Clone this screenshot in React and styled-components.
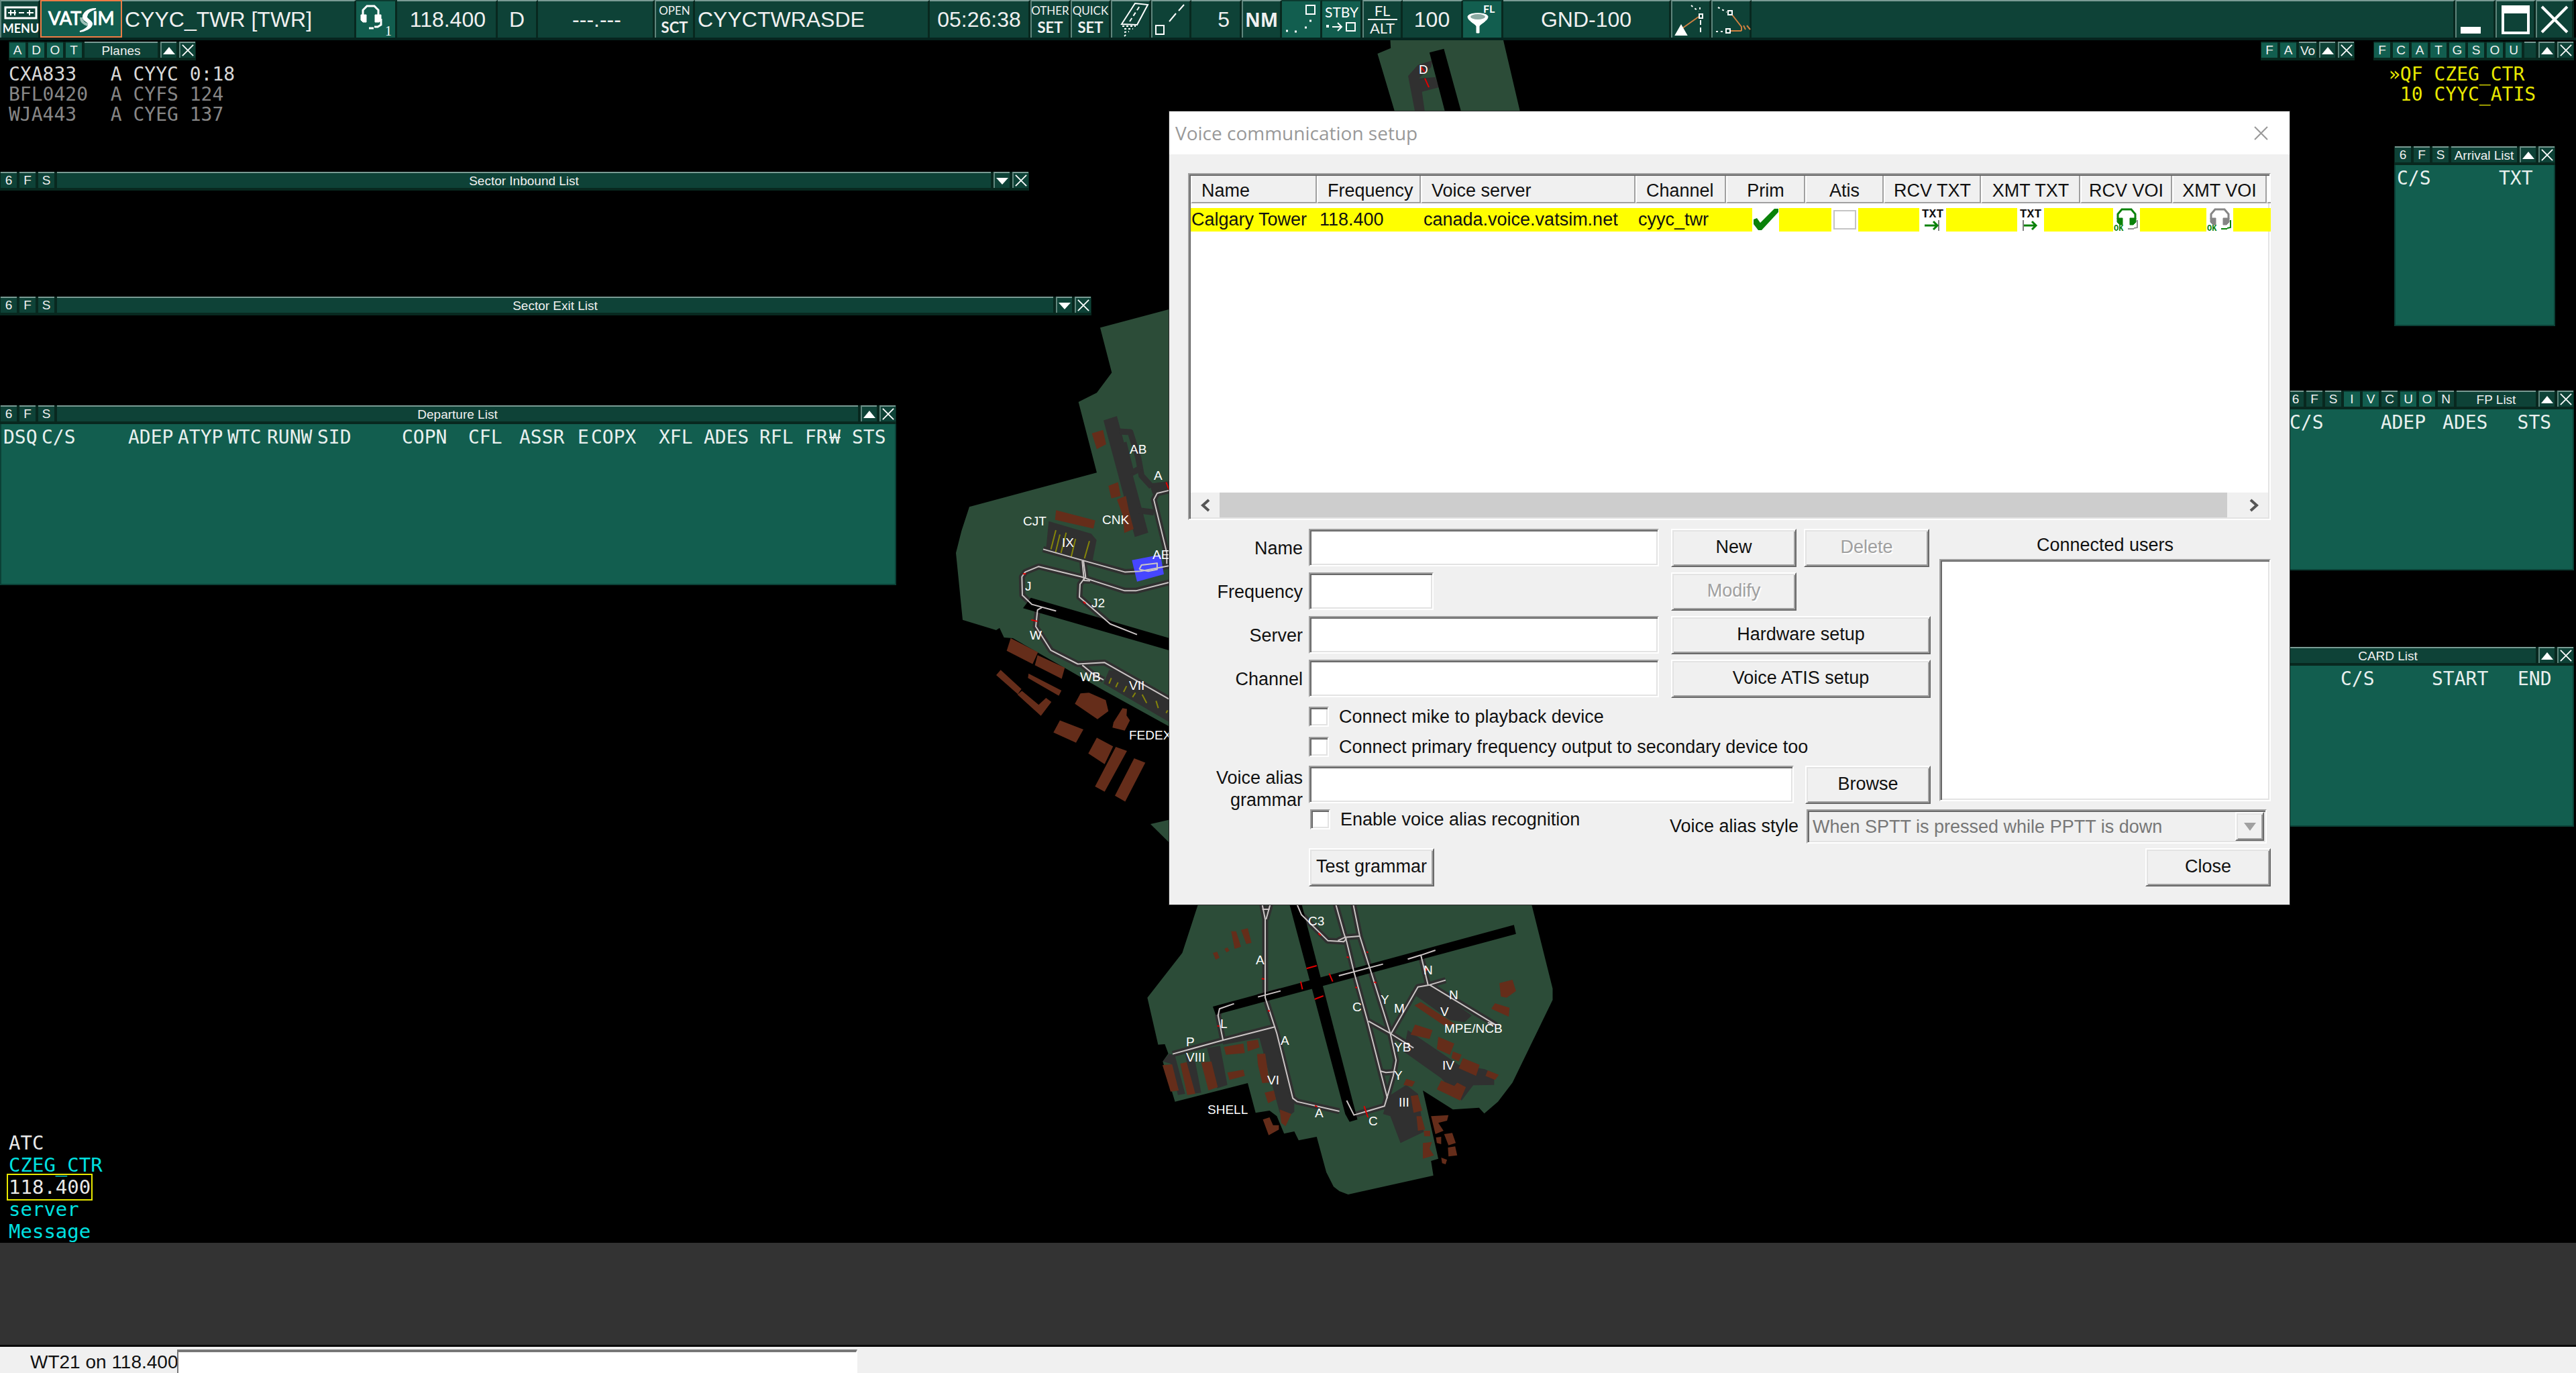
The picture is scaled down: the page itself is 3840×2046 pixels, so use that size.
import React from "react";
import styled, { createGlobalStyle } from "styled-components";

const GlobalStyle = createGlobalStyle`
  * {
    box-sizing: border-box;
  }

  body {
    margin: 0;
    background: #000;
    font-family: "Liberation Sans", Arial, sans-serif;
  }

  button, input, select {
    font-family: inherit;
    border-radius: 0;
  }
`;

const Screen = styled.div`
  display: flex;
  flex-direction: column;
  height: 100vh;
  overflow: hidden;
`;

/* ---------- top toolbar ---------- */

const Toolbar = styled.header`
  display: flex;
  height: 60px;
  padding-right: 3px;
  border-bottom: 4px solid #06241e;
`;

const ToolButton = styled.button`
  display: flex;
  flex: ${(p) => (p.$grow ? "1" : "none")};
  align-items: center;
  justify-content: ${(p) => p.$align || "center"};
  width: ${(p) => p.$width || 60}px;
  height: 56px;
  padding: ${(p) => p.$pad || "0"};
  background: ${(p) => (p.$lit ? "#125e4f" : "#0e4237")};
  border: 0 solid #08281f;
  border-top: 2px solid ${(p) => (p.$lit ? "#0b3a30" : "#7a9b94")};
  border-left: ${(p) => (p.$edge ? "2px solid #5f857c" : "0")};
  border-right-width: 3px;
  color: #f0f0f0;
  font-size: 32px;
  line-height: 36px;
  white-space: pre;

  svg {
    display: block;
    flex: none;
    overflow: visible;
  }
`;

const LogoButton = styled(ToolButton)`
  background: #125e4f;
  border: 2px solid #ee7c45;
`;

const TwoLine = styled.span`
  display: flex;
  flex-direction: column;
  align-items: center;
  font-family: Lato, sans-serif;
  font-size: ${(p) => (p.$big ? 22 : 17)}px;
  line-height: 24px;

  b {
    font-size: 22px;
    line-height: 26px;
  }

  hr {
    width: 44px;
    margin: 0;
    border: 0;
    border-top: 2px solid #f0f0f0;
  }
`;

const Bold = styled.b`
  font-family: "Open Sans", sans-serif;
  font-size: 28px;
`;

/* ---------- radar and list windows ---------- */

const Radar = styled.main`
  position: relative;
  flex: 1;
  background: #000;
`;

const Map = styled.svg`
  position: absolute;
  inset: 0;
  width: 100%;
  height: 100%;

  polyline, polygon {
    vector-effect: non-scaling-stroke;
  }

  text {
    fill: #fff;
    font-family: "Liberation Sans", Arial, sans-serif;
    font-size: 19px;
  }
`;

const ListWindow = styled.section`
  position: absolute;
  top: ${(p) => p.$top}px;
  left: ${(p) => (p.$left === undefined ? "auto" : p.$left + "px")};
  right: ${(p) => (p.$right === undefined ? "auto" : p.$right + "px")};
  width: ${(p) => p.$width}px;
`;

const ListBar = styled.div`
  display: flex;
  gap: 4px;
  height: 28px;
  padding: 0 1px;
  background: #08281f;
`;

const BarButton = styled.button`
  display: flex;
  align-items: center;
  justify-content: center;
  width: 24px;
  height: 24px;
  padding: 0;
  background: ${(p) => (p.$lit ? "#125e4f" : "#0e4237")};
  border: 0;
  border-top: 2px solid ${(p) => (p.$lit ? "#0b3a30" : "#7a9b94")};
  border-left: ${(p) => (p.$edge ? "2px solid #5f857c" : "0")};
  color: #f0f0f0;
  font-size: 19px;
`;

const BarTitle = styled.h2`
  flex: 1;
  height: 24px;
  margin: 0;
  overflow: hidden;
  background: #0e4237;
  border-top: 2px solid #7a9b94;
  color: #f0f0f0;
  font-size: 19px;
  font-weight: normal;
  line-height: 24px;
  text-align: center;
  white-space: nowrap;
`;

const ListBody = styled.div`
  height: 240px;
  padding-top: 5px;
  background: #125e4f;
  border: 2px solid #0b4036;
  border-top: 0;
`;

const ListTable = styled.table`
  width: 100%;
  table-layout: fixed;
  border-collapse: collapse;

  th {
    padding: 0;
    color: #e8f0ee;
    font-family: "DejaVu Sans Mono", monospace;
    font-size: 28px;
    font-weight: normal;
    line-height: 30px;
    text-align: left;
    white-space: nowrap;
  }
`;

const MonoLine = styled.div`
  height: ${(p) => p.$height || 30}px;
  color: ${(p) => p.$color};
  font-family: "DejaVu Sans Mono", monospace;
  line-height: ${(p) => p.$height || 30}px;
  white-space: pre;
`;

const MonoBlock = styled.div`
  padding-top: 6px;
  padding-left: ${(p) => p.$indent || 0}px;
  font-size: 28px;
`;

const Channels = styled.div`
  position: absolute;
  bottom: 0;
  left: 13px;
  font-size: 29px;
`;

const Selected = styled.span`
  outline: 2px solid #e8e800;
  outline-offset: 1px;
`;

/* ---------- bottom ---------- */

const Messages = styled.section`
  height: 155px;
  background: #333;
  border-bottom: 3px solid #0a0a0a;
`;

const CommandLine = styled.footer`
  display: flex;
  height: 39px;
  padding-top: 4px;
  background: #f0f0f0;

  label {
    width: 264px;
    padding-left: 45px;
    color: #111;
    font-size: 28px;
    line-height: 38px;
    white-space: nowrap;
  }

  input {
    width: 1014px;
    height: 39px;
    background: #fff;
    border: 2px solid #fff;
    border-top: 4px solid #777;
    border-left: 2px solid #777;
  }
`;

/* ---------- voice dialog ---------- */

const Dialog = styled.section`
  position: absolute;
  top: 106px;
  left: 1743px;
  width: 1670px;
  background: #f0f0f0;
  outline: 1px solid #2b2b2b;
  color: #111;
  font-size: 27px;
`;

const DialogTitle = styled.header`
  display: flex;
  align-items: center;
  justify-content: space-between;
  height: 64px;
  padding: 0 32px 0 9px;
  background: #fff;

  h1 {
    margin: 0;
    color: #999;
    font-family: "Open Sans", sans-serif;
    font-size: 28px;
    font-weight: normal;
  }

  button {
    padding: 0;
    background: none;
    border: 0;
  }

  svg {
    display: block;
  }
`;

const DialogBody = styled.form`
  padding: 28px 28px 27px;
`;

const sunken = `
  background: #fff;
  border: 2px solid #fff;
  border-top-color: #a0a0a0;
  border-left-color: #a0a0a0;
  box-shadow: inset 2px 2px #696969, inset -2px -2px #e3e3e3;
`;

const raised = `
  background: #f0f0f0;
  border: 2px solid #696969;
  border-top-color: #fff;
  border-left-color: #fff;
  box-shadow: inset 2px 2px #e3e3e3, inset -2px -2px #a0a0a0;
`;

const ListView = styled.div`
  ${sunken}
  display: flex;
  flex-direction: column;
  justify-content: space-between;
  height: 517px;
  padding: 2px;
`;

const FreqTable = styled.table`
  width: 100%;
  table-layout: fixed;
  border-collapse: separate;
  border-spacing: 0;

  th {
    height: 41px;
    padding: 4px 0 0 14px;
    background: #f0f0f0;
    border-right: 2px solid #a0a0a0;
    border-bottom: 2px solid #a0a0a0;
    border-left: 2px solid #fff;
    font-weight: normal;
    line-height: 30px;
    text-align: left;
    white-space: nowrap;
  }

  th.mid {
    padding: 4px 0 0;
    text-align: center;
  }

  th:last-child {
    border-right: 0;
    background: #fff;
    padding: 0;
  }

  tbody::before {
    content: "";
    display: block;
    height: 7px;
  }

  td {
    height: 35px;
    padding: 0 0 0 4px;
    background: #ff0;
    line-height: 35px;
    white-space: nowrap;
  }

  td:first-child {
    padding-left: 1px;
  }

  td.mid {
    padding: 0;
  }

  svg {
    display: block;
    margin: 0 auto;
    overflow: visible;
    background: #fff;
  }
`;

const AtisBox = styled.label`
  display: block;
  width: 40px;
  height: 35px;
  margin: 0 auto;
  padding: 3px;
  background: #fff;

  input {
    display: block;
    width: 34px;
    height: 29px;
    margin: 0;
    appearance: none;
    border: 2px solid #c4c4c4;
  }
`;

const ScrollBar = styled.div`
  display: flex;
  height: 37px;
  background: #f0f0f0;

  button {
    display: flex;
    align-items: center;
    justify-content: center;
    width: 43px;
    padding: 0;
    background: none;
    border: 0;
  }
`;

const Thumb = styled.div`
  flex: 1;
  margin-right: 18px;
  background: #cdcdcd;
`;

const Columns = styled.div`
  display: flex;
  justify-content: space-between;
  margin-top: 13px;
`;

const Fields = styled.div`
  display: flex;
  flex-direction: column;
  gap: 9px;
  width: 1107px;
`;

const Row = styled.div`
  display: flex;
  align-items: ${(p) => p.$align || "center"};
  height: 56px;
`;

const FieldLabel = styled.label`
  width: 171px;
  margin-right: 9px;
  padding-top: 2px;
  line-height: 33px;
  text-align: right;
`;

const TextInput = styled.input`
  ${sunken}
  width: ${(p) => p.$width || 522}px;
  height: 56px;
  padding: 0 8px;
  font-size: 27px;
`;

const Actions = styled.div`
  display: flex;
  gap: 11px;
  width: 387px;
  margin-left: auto;
`;

const PushButton = styled.button`
  ${raised}
  width: ${(p) => p.$width || 187}px;
  height: 57px;
  padding: 0 0 2px;
  color: #111;
  font-size: 27px;
  white-space: nowrap;

  &:disabled {
    color: #a0a0a0;
    text-shadow: 2px 2px #fff;
  }
`;

const BrowseButton = styled(PushButton)`
  margin-left: auto;
`;

const Checks = styled.div`
  display: flex;
  flex-direction: column;
  gap: 15px;
  padding: 5px 0 4px 180px;
`;

const CheckLabel = styled.label`
  display: flex;
  align-items: center;
  gap: 15px;
  height: 30px;
  line-height: 34px;
  white-space: nowrap;

  input {
    ${sunken}
    width: 30px;
    height: 30px;
    margin: 0;
    appearance: none;
  }
`;

const Users = styled.div`
  width: 494px;

  h3 {
    margin: 0;
    padding-top: 2px;
    font-size: 27px;
    font-weight: normal;
    line-height: 45px;
    height: 45px;
    text-align: center;
  }
`;

const UserList = styled.ul`
  ${sunken}
  height: 361px;
  margin: 0;
  padding: 0;
`;

const AliasRow = styled.div`
  display: flex;
  align-items: flex-start;
  justify-content: space-between;
  height: 51px;
  margin-top: 9px;
  padding: 0 6px 0 182px;
`;

const StyleField = styled.div`
  display: flex;
  align-items: center;
  gap: 12px;
`;

const SelectBox = styled.div`
  ${sunken}
  display: flex;
  width: 686px;
  height: 51px;
  padding: 2px;
  background: #f0f0f0;

  select {
    flex: 1;
    padding: 0 5px;
    appearance: none;
    background: none;
    border: 0;
    color: #777;
    font-size: 27px;
    opacity: 1;
  }
`;

const DropArrow = styled.span`
  ${raised}
  display: flex;
  align-items: center;
  justify-content: center;
  width: 43px;
`;

const BottomRow = styled.div`
  display: flex;
  justify-content: space-between;
  margin-top: 7px;
  padding-left: 180px;
`;

/* ---------- toolbar icons ---------- */

const captionFont = { fontFamily: "Lato, sans-serif", fill: "#fff" };

const MenuIcon = () => (
  <svg width="56" height="54" fill="none" stroke="#fff" strokeWidth="3">
    <rect x="6" y="9" width="46" height="16" />
    <path d="M10 17H22M14 13V21M20 13V21M26 17H34M38 17H48M42 13V21" strokeWidth="2" />
    <text x="29" y="47" textAnchor="middle" fontSize="18" fontWeight="bold" stroke="none" {...captionFont}>MENU</text>
  </svg>
);

const VatsimLogo = () => (
  <svg width="116" height="52">
    <text x="9" y="35" fontSize="27" stroke="#fff" {...captionFont}>VAT</text>
    <text x="75" y="35" fontSize="27" stroke="#fff" {...captionFont}>IM</text>
    <path
      d="M80 11C66 11 60 19 61 25C62 29 69 30 69 34C69 39 62 43 56 45C64 44 73 40 74 34C75 29 66 27 66 23C66 17 72 13 80 11Z"
      fill="#fff"
      stroke="#fff"
      strokeWidth="2"
    />
    <path d="M58 24C58 31 64 34 68 35" stroke="#9fc2ba" strokeWidth="4" fill="none" />
  </svg>
);

const HeadsetIcon = () => (
  <svg width="57" height="54" fill="none" stroke="#fff" strokeWidth="3">
    <path d="M9 20V13L15 7H26L32 13V20" />
    <path d="M6 20H14V31H9L6 28ZM27 20H36V28L33 31H27Z" fill="#fff" strokeWidth="1" />
    <path d="M36 26V35L31 38H26M18 40H25" />
    <text x="42" y="51" fontSize="20" stroke="none" fill="#fff" fontFamily="Liberation Serif, serif">1</text>
  </svg>
);

const RunwayIcon = () => (
  <svg width="54" height="54" fill="none" stroke="#fff" strokeWidth="2">
    <path d="M13 34L33 3L52 5L36 35Z" />
    <path d="M25 30L40 7" strokeDasharray="6 4" />
    <path d="M14 37L34 37M17 41L30 41M17 46L24 45M17 52L20 49" strokeDasharray="3 3" />
  </svg>
);

const VectorIcon = () => (
  <svg width="54" height="54" fill="none" stroke="#fff" strokeWidth="2">
    <rect x="4" y="36" width="12" height="13" />
    <path d="M24 30L34 18M38 14L46 5" />
  </svg>
);

const TrailIcon = () => (
  <svg width="56" height="54" fill="none" stroke="#fff" strokeWidth="2">
    <rect x="35" y="6" width="13" height="13" />
    <path d="M40 29h3M33 39h3M18 45h3M5 44h3" strokeWidth="3" />
  </svg>
);

const StandbyIcon = () => (
  <svg width="56" height="54" fill="none" stroke="#fff" strokeWidth="2">
    <text x="28" y="24" textAnchor="middle" fontSize="21" stroke="none" {...captionFont}>STBY</text>
    <path d="M5 37h4" strokeWidth="4" />
    <path d="M14 38H28M22 32L28 38L22 44" />
    <rect x="35" y="32" width="13" height="12" />
  </svg>
);

const FilterIcon = () => (
  <svg width="56" height="54" stroke="#fff">
    <text x="29" y="17" fontSize="16" fontWeight="bold" stroke="none" {...captionFont}>FL</text>
    <path d="M6 23C6 16 36 16 36 23C36 29 24 34 23 37V47H19V37C18 34 6 29 6 23Z" fill="#fff" />
    <ellipse cx="21" cy="23" rx="11" ry="4" fill="#8aa9a2" stroke="none" />
  </svg>
);

const ConeIcon = () => (
  <svg width="54" height="54" fill="none" stroke="#fff" strokeWidth="2">
    <path d="M14 40L38 23" stroke="#d08040" />
    <path d="M4 50L12 36L20 50Z" fill="#fff" />
    <rect x="39" y="19" width="5" height="6" />
    <path d="M41 28V49" strokeDasharray="7 4" />
    <path d="M27 6L38 15M40 9V16" strokeDasharray="3 4" />
  </svg>
);

const RouteIcon = () => (
  <svg width="54" height="54" fill="none" stroke="#fff" strokeWidth="2">
    <path d="M28 20L42 38V44M25 44H42M50 36L55 42M45 36L48 42" stroke="#d08040" />
    <rect x="22" y="14" width="6" height="6" />
    <rect x="19" y="41" width="6" height="6" fill="#0e4237" />
    <path d="M7 9L20 16M4 45H17" strokeDasharray="3 4" />
  </svg>
);

const CrossIcon = ({ size = 18, color = "#fff", width = 2 }) => (
  <svg width={size} height={size} viewBox="0 0 20 20" stroke={color} strokeWidth={width}>
    <path d="M1 1L19 19M19 1L1 19" />
  </svg>
);

/* ---------- table icons ---------- */

const CheckIcon = () => (
  <svg width="40" height="35">
    <path d="M2 17L7 15L12 22L33 1H39V6L14 33H9L2 24Z" fill="#0a820a" />
  </svg>
);

const TxtIcon = ({ out }) => (
  <svg width="40" height="35" fill="none">
    <text x="20" y="14" textAnchor="middle" fontSize="18" fontWeight="bold" fill="#111" fontFamily="Liberation Mono, monospace">TXT</text>
    <path d={out ? "M9 18V34" : "M29 18V34"} stroke="#808080" strokeWidth="2" />
    <path d={out ? "M10 26H28M22 20L28 26L22 32" : "M8 26H27M21 20L27 26L21 32"} stroke="#0a820a" strokeWidth="3" />
  </svg>
);

const VoiceIcon = ({ color, mic }) => (
  <svg width="40" height="35" fill="none" stroke={color} strokeWidth="3">
    <path d="M7 16V9L13 2H27L33 9V16" />
    <path d="M6 15H14V25H10L6 21ZM25 15H34V21L30 25H25Z" fill={color} strokeWidth="1" />
    <path d="M36 18V29L31 30M22 31H31" stroke={mic} strokeWidth="2" />
    <text x="1" y="34" fontSize="12" fontWeight="bold" fill="#0a820a" stroke="none" fontFamily="Liberation Mono, monospace">OK</text>
  </svg>
);

/* ---------- airport map ---------- */

const GRASS = "#2c4c38";
const APRON = "#303030";
const BUILDING = "#652d1a";

const sheets = [
  {
    transform: "translate(1300 0) scale(0.861 0.3333)",
    grass: ["897,170 1092,170 1122,500 905,500 875,240 898,215"],
    runways: ["965,235 990,218 1020,500 992,500"],
    aprons: ["928,340 945,290 970,270 968,300 947,350 975,345 982,390 952,410 957,500 940,500"],
    buildings: [],
    lines: [],
    stops: ["950,298 957,322", "957,350 964,390"],
    stands: [],
  },
  {
    transform: "translate(1400 440) scale(0.3333 0.5484)",
    grass: [
      "1030,38 720,88 772,210 705,265 623,290 705,482 135,575 100,640 75,700 105,882 255,910 270,904 290,930 330,932 560,1012 740,1075 1030,1172",
      "945,1437 1030,1425 1030,1488",
    ],
    aprons: [
      "735,340 795,328 935,645 875,657",
      "490,614 680,648 704,665 685,725 478,688",
      "760,1018 850,1030 1030,1100 1030,1160 735,1055",
      "940,512 1030,505 1030,535 955,540",
    ],
    runways: ["410,822 1030,932 1030,965 375,850"],
    buildings: [
      "683,375 733,366 747,405 705,418",
      "757,518 800,508 812,545 770,552",
      "795,555 835,545 850,590 870,635 828,646 822,600",
      "523,584 698,612 690,634 518,610",
      "320,932 442,970 418,1002 302,966",
      "440,978 562,1012 548,1042 428,1005",
      "275,1018 368,1070 352,1084 255,1032",
      "400,1028 547,1074 535,1088 397,1040",
      "370,1075 445,1113 478,1094 502,1105 455,1143 350,1085",
      "632,1082 670,1080 745,1100 757,1130 708,1152 607,1110",
      "780,1160 820,1122 840,1124 838,1142 853,1155 830,1183 775,1175",
      "540,1155 645,1180 612,1216 511,1188",
      "705,1202 778,1226 740,1274 667,1245",
      "790,1227 840,1238 740,1349 697,1335",
      "872,1258 922,1270 832,1376 786,1360",
    ],
    taxi: ["805,370 855,372 890,440 905,490 950,520", "855,485 900,470", "895,585 960,590", "825,400 860,485"],
    blocks: ["862,720 990,705 1005,758 885,778"],
    lines: [
      "465,690 640,720 830,752 900,750 1030,735",
      "523,858 415,840 372,815 370,765 385,752 445,737 635,765 700,778 830,803 880,803 1030,780",
      "645,720 655,765 630,785 627,820 680,848 765,893 885,922",
      "640,722 648,775 675,776",
      "460,848 440,855 432,900 500,965 620,1002 740,998 1030,1098",
      "640,1005 690,1030 735,1045",
      "1030,530 975,538 960,555 1018,700 1018,730",
      "895,745 905,733 975,728 975,745 935,750 895,745",
    ],
    stops: ["375,757 388,757", "645,833 655,838", "412,882 440,886", "1015,508 1028,528"],
    stands: [
      "500,690 522,638", "520,700 540,650", "545,700 568,645", "590,712 610,662", "650,715 672,668",
      "760,1055 770,1040", "790,1065 800,1052", "825,1078 838,1062", "865,1092 878,1080",
      "908,1085 928,1108", "970,1102 980,1122", "1015,1135 1022,1128",
    ],
  },
  {
    transform: "translate(1680 1340) scale(0.4337 0.3333)",
    grass: [
      "245,20 190,240 70,440 107,650 130,648 142,690 123,725 165,905 415,822 442,955 490,945 515,970 540,1048 575,1038 590,1078 652,1062 685,1220 710,1285 730,1305 760,1320 1053,1235 1045,1170 1070,1160 1017,855 1120,940 1210,932 1228,958 1275,905 1325,820 1463,450 1463,400 1390,20",
    ],
    aprons: [
      "330,625 400,590 510,570 520,620 575,905 575,950 560,965 525,955 455,620 330,650",
      "275,665 320,655 345,830 310,845",
      "200,690 235,730 255,865 225,870",
      "123,725 145,690 165,700 200,870 175,875 150,735",
      "1045,390 1185,520 1160,550 1110,540 975,415 1000,400",
      "965,585 1140,740 1230,760 1262,780 1262,830 1190,832 1150,900 1080,800 950,680",
      "900,880 960,830 1000,870 1020,1040 940,1090 905,970 880,960",
    ],
    runways: ["558,20 600,20 792,985 765,995 750,960", "295,480 1330,115 1337,155 305,517"],
    buildings: [
      "358,143 375,143 392,212 370,222",
      "392,137 415,130 428,195 410,200",
      "335,222 345,215 352,230 342,238",
      "295,240 310,235 318,262 305,270",
      "1280,375 1325,360 1337,410 1305,440 1285,435",
      "1265,465 1315,485 1312,525 1252,490",
      "988,475 1010,460 1130,560 1090,565",
      "990,560 1050,585 1040,625 975,605",
      "1070,615 1125,645 1110,695 1065,670",
      "1120,680 1150,695 1140,725 1115,710",
      "1155,710 1212,740 1200,790 1140,755",
      "1240,765 1278,785 1265,808 1232,790",
      "1080,810 1125,835 1135,820 1165,840 1145,900 1065,850",
      "960,803 990,815 980,838 950,830",
      "975,880 1000,875 1015,945 985,955",
      "995,970 1012,970 1025,1030 1000,1035",
      "1020,1035 1042,1035 1042,1060 1022,1060",
      "1017,1090 1048,1085 1040,1115 1055,1145 1017,1160",
      "1045,970 1105,965 1100,990 1070,1000 1088,1035 1060,1050",
      "1062,1065 1080,1062 1080,1095 1065,1090",
      "1090,1050 1118,1045 1130,1090 1105,1100",
      "1103,1110 1128,1105 1135,1145 1105,1150",
      "1080,1155 1100,1165 1095,1185 1083,1180",
      "122,742 155,738 178,855 150,860",
      "183,735 205,728 235,870 207,875",
      "255,730 290,725 312,840 280,855",
      "333,660 400,645 405,688 340,695",
      "412,635 450,628 455,662 415,680",
      "345,775 400,762 405,790 352,808",
      "447,692 475,690 490,820 465,822 450,740",
      "473,865 505,855 512,895 485,912",
      "525,940 565,960 545,1015 530,1000",
      "467,985 490,975 502,1010 522,1010 522,1030 487,1055",
    ],
    lines: [
      "465,25 475,90 475,440 515,600 570,890 585,905 730,948",
      "492,25 478,90",
      "465,45 490,45",
      "585,25 600,70 690,185 745,190 755,175",
      "718,25 745,150 755,190 780,325 830,560 895,890",
      "778,25 800,165 835,310 905,600 925,720 915,790 893,890 885,925 780,965 755,900",
      "725,185 750,170 800,165",
      "728,342 880,290",
      "965,268 1010,250 1060,228",
      "1010,250 1035,385",
      "1095,362 1040,383 1000,392 908,600",
      "1040,383 1265,560 1240,552",
      "830,545 905,600 985,665",
      "870,768 890,775 918,772",
      "368,467 318,490 313,520 330,630",
      "157,692 330,630 510,570",
      "450,437 528,410",
    ],
    stops: [
      "617,310 652,297", "695,332 707,368", "597,368 603,403", "645,447 675,432", "815,925 828,975",
      "463,355 472,357", "484,498 491,500", "310,566 317,568", "658,152 666,162", "755,258 762,260",
      "823,235 829,238", "849,370 857,374", "785,393 791,396", "646,923 654,928", "1025,308 1032,318",
    ],
    stands: [],
  },
];

const mapLabels = [
  ["D", 2115, 110], ["AB", 1684, 676], ["A", 1720, 715], ["CJT", 1525, 783], ["CNK", 1643, 781],
  ["AE", 1718, 833], ["IX", 1583, 815], ["J", 1528, 880], ["J2", 1627, 905], ["W", 1535, 953],
  ["WB", 1610, 1015], ["VII", 1683, 1028], ["FEDEX", 1683, 1102], ["C3", 1950, 1379],
  ["A", 1872, 1437], ["N", 2122, 1452], ["N", 2160, 1489], ["Y", 2058, 1496], ["C", 2016, 1507],
  ["M", 2078, 1509], ["V", 2147, 1514], ["MPE/NCB", 2153, 1539], ["L", 1819, 1532],
  ["A", 1909, 1557], ["P", 1768, 1559], ["YB", 2078, 1567], ["VIII", 1768, 1582],
  ["IV", 2150, 1594], ["Y", 2078, 1609], ["VI", 1889, 1616], ["III", 2085, 1649],
  ["SHELL", 1800, 1660], ["A", 1960, 1665], ["C", 2040, 1677],
];

const Shapes = ({ items, fill }) =>
  (items || []).map((points) => <polygon key={points} points={points} fill={fill} />);

const Strokes = ({ items, color, width }) =>
  (items || []).map((points) => (
    <polyline key={points} points={points} fill="none" stroke={color} strokeWidth={width} strokeLinejoin="round" />
  ));

const AirportMap = () => (
  <Map viewBox="0 60 3840 1792" preserveAspectRatio="xMidYMin slice" aria-label="Airport map">
    {sheets.map((sheet) => (
      <g key={sheet.transform} transform={sheet.transform}>
        <Shapes items={sheet.grass} fill={GRASS} />
        <Shapes items={sheet.aprons} fill={APRON} />
        <Strokes items={sheet.taxi} color={APRON} width="9" />
        <Strokes items={sheet.lines} color={APRON} width="9" />
        <Shapes items={sheet.runways} fill="#000" />
        <Shapes items={sheet.buildings} fill={BUILDING} />
        <Shapes items={sheet.blocks} fill="#4646ff" />
        <Strokes items={sheet.stands} color="#85850a" width="2" />
        <Strokes items={sheet.lines} color="#cbc5c5" width="2" />
        <Strokes items={sheet.stops} color="#e00000" width="2" />
      </g>
    ))}
    {mapLabels.map(([text, x, y]) => (
      <text key={`${x}-${y}`} x={x} y={y}>{text}</text>
    ))}
  </Map>
);

/* ---------- list windows ---------- */

// A "*" after a letter marks a filter that is switched on.
const Bar = ({ letters, title, closed }) => (
  <ListBar>
    {letters.map((l) => (
      <BarButton key={l} $lit={l.endsWith("*")}>{l[0]}</BarButton>
    ))}
    <BarTitle>{title}</BarTitle>
    <BarButton $edge aria-label="Roll">
      <svg width="18" height="11" fill="#fff">
        <path d={closed ? "M0 1H18L9 11Z" : "M0 11H18L9 0Z"} />
      </svg>
    </BarButton>
    <BarButton $edge aria-label="Close list"><CrossIcon /></BarButton>
  </ListBar>
);

const Headings = ({ columns }) => (
  <ListBody>
    <ListTable>
      <colgroup>
        {columns.map(([, width], i) => <col key={i} width={width} />)}
      </colgroup>
      <thead>
        <tr>
          {columns.map(([name], i) => (
            <th key={i}>{name === "W" ? <s>W</s> : name}</th>
          ))}
        </tr>
      </thead>
    </ListTable>
  </ListBody>
);

const departureColumns = [
  ["", 3], ["DSQ", 57], ["C/S", 129], ["ADEP", 74], ["ATYP", 74], ["WTC", 59], ["RUNW", 75],
  ["SID", 126], ["COPN", 99], ["CFL", 76], ["ASSR", 87], ["E", 20], ["COPX", 101], ["XFL", 67],
  ["ADES", 83], ["RFL", 68], ["FR", 36], ["W", 34], ["STS", 64],
];

const arrivalColumns = [["", 2], ["C/S", 152], ["TXT", 82]];

const fpColumns = [["", 2], ["C/S", 135], ["ADEP", 92], ["ADES", 111], ["STS", 82]];

const cardColumns = [["", 233], ["C/S", 136], ["START", 128], ["END", 82]];

/* ---------- dialog ---------- */

const Chevron = ({ flip }) => (
  <svg width="16" height="20" fill="none" stroke="#555" strokeWidth="4">
    <path d={flip ? "M3 2L12 10L3 18" : "M13 2L4 10L13 18"} />
  </svg>
);

const freqColumns = [
  ["Name", 188], ["Frequency", 155], ["Voice server", 320], ["Channel", 135], ["Prim", 118, "mid"],
  ["Atis", 117, "mid"], ["RCV TXT", 145, "mid"], ["XMT TXT", 148, "mid"], ["RCV VOI", 137, "mid"],
  ["XMT VOI", 141, "mid"], ["", 6],
];

const VoiceDialog = () => (
  <Dialog role="dialog" aria-labelledby="voice-title">
    <DialogTitle>
      <h1 id="voice-title">Voice communication setup</h1>
      <button aria-label="Close dialog"><CrossIcon size={21} color="#999" /></button>
    </DialogTitle>
    <DialogBody onSubmit={(e) => e.preventDefault()}>
      <ListView>
        <FreqTable>
          <colgroup>
            {freqColumns.map(([name, width]) => <col key={name} width={width} />)}
          </colgroup>
          <thead>
            <tr>
              {freqColumns.map(([name, , cls]) => <th key={name} className={cls}>{name}</th>)}
            </tr>
          </thead>
          <tbody>
            <tr>
              <td>Calgary Tower</td>
              <td>118.400</td>
              <td>canada.voice.vatsim.net</td>
              <td>cyyc_twr</td>
              <td className="mid"><CheckIcon /></td>
              <td className="mid"><AtisBox><input type="checkbox" aria-label="Atis" /></AtisBox></td>
              <td className="mid"><TxtIcon /></td>
              <td className="mid"><TxtIcon out /></td>
              <td className="mid"><VoiceIcon color="#0a820a" mic="#909090" /></td>
              <td className="mid"><VoiceIcon color="#858585" mic="#0a820a" /></td>
              <td className="mid" />
            </tr>
          </tbody>
        </FreqTable>
        <ScrollBar>
          <button type="button" aria-label="Scroll left"><Chevron /></button>
          <Thumb />
          <button type="button" aria-label="Scroll right"><Chevron flip /></button>
        </ScrollBar>
      </ListView>

      <Columns>
        <Fields>
          <Row>
            <FieldLabel htmlFor="name">Name</FieldLabel>
            <TextInput id="name" />
            <Actions>
              <PushButton>New</PushButton>
              <PushButton disabled>Delete</PushButton>
            </Actions>
          </Row>
          <Row>
            <FieldLabel htmlFor="frequency">Frequency</FieldLabel>
            <TextInput id="frequency" $width={186} />
            <Actions><PushButton disabled>Modify</PushButton></Actions>
          </Row>
          <Row>
            <FieldLabel htmlFor="server">Server</FieldLabel>
            <TextInput id="server" />
            <Actions><PushButton $width={387}>Hardware setup</PushButton></Actions>
          </Row>
          <Row>
            <FieldLabel htmlFor="channel">Channel</FieldLabel>
            <TextInput id="channel" />
            <Actions><PushButton $width={387}>Voice ATIS setup</PushButton></Actions>
          </Row>
          <Checks>
            <CheckLabel><input type="checkbox" />Connect mike to playback device</CheckLabel>
            <CheckLabel><input type="checkbox" />Connect primary frequency output to secondary device too</CheckLabel>
          </Checks>
          <Row $align="flex-start">
            <FieldLabel htmlFor="grammar">Voice alias grammar</FieldLabel>
            <TextInput id="grammar" $width={723} />
            <BrowseButton>Browse</BrowseButton>
          </Row>
        </Fields>
        <Users>
          <h3 id="users">Connected users</h3>
          <UserList aria-labelledby="users" />
        </Users>
      </Columns>

      <AliasRow>
        <CheckLabel><input type="checkbox" />Enable voice alias recognition</CheckLabel>
        <StyleField>
          <label htmlFor="alias-style">Voice alias style</label>
          <SelectBox>
            <select id="alias-style" disabled>
              <option>When SPTT is pressed while PPTT is down</option>
            </select>
            <DropArrow>
              <svg width="18" height="12" fill="#a0a0a0"><path d="M0 0H18L9 12Z" /></svg>
            </DropArrow>
          </SelectBox>
        </StyleField>
      </AliasRow>
      <BottomRow>
        <PushButton>Test grammar</PushButton>
        <PushButton>Close</PushButton>
      </BottomRow>
    </DialogBody>
  </Dialog>
);

const App = () => {
  return (
    <Screen>
      <GlobalStyle />
      <Toolbar>
        <ToolButton $edge><MenuIcon /></ToolButton>
        <LogoButton $width={122} aria-label="VATSIM"><VatsimLogo /></LogoButton>
        <ToolButton $width={349} $align="flex-start" $pad="0 4px">CYYC_TWR [TWR]</ToolButton>
        <ToolButton $width={61} $lit><HeadsetIcon /></ToolButton>
        <ToolButton $width={150} $align="flex-end" $pad="0 15px">118.400</ToolButton>
        <ToolButton>D</ToolButton>
        <ToolButton $width={174} $pad="0 0 0 4px">---.---</ToolButton>
        <ToolButton $edge><TwoLine>OPEN<b>SCT</b></TwoLine></ToolButton>
        <ToolButton $width={350} $align="flex-start" $pad="0 4px">CYYCTWRASDE</ToolButton>
        <ToolButton $width={150}>05:26:38</ToolButton>
        <ToolButton $edge><TwoLine>OTHER<b>SET</b></TwoLine></ToolButton>
        <ToolButton $edge><TwoLine>QUICK<b>SET</b></TwoLine></ToolButton>
        <ToolButton $edge aria-label="Runway"><RunwayIcon /></ToolButton>
        <ToolButton $edge aria-label="Vector"><VectorIcon /></ToolButton>
        <ToolButton $width={75} $align="flex-end" $pad="0 15px">5</ToolButton>
        <ToolButton $edge><Bold>NM</Bold></ToolButton>
        <ToolButton $lit aria-label="Trail"><TrailIcon /></ToolButton>
        <ToolButton $lit><StandbyIcon /></ToolButton>
        <ToolButton $edge><TwoLine $big>FL<hr />ALT</TwoLine></ToolButton>
        <ToolButton $width={90}>100</ToolButton>
        <ToolButton $lit><FilterIcon /></ToolButton>
        <ToolButton $width={250}>GND-100</ToolButton>
        <ToolButton $edge aria-label="Bearing"><ConeIcon /></ToolButton>
        <ToolButton $edge aria-label="Route"><RouteIcon /></ToolButton>
        <ToolButton $grow aria-label="Drag bar" />
        <ToolButton $edge aria-label="Minimize">
          <svg width="44" height="44" fill="#fff"><path d="M0 33H30V43H0Z" /></svg>
        </ToolButton>
        <ToolButton $edge aria-label="Maximize">
          <svg width="42" height="43" fill="none" stroke="#fff">
            <path d="M2 0V41H40V0" strokeWidth="4" />
            <path d="M0 6H42" strokeWidth="12" />
          </svg>
        </ToolButton>
        <ToolButton $width={57} $edge aria-label="Exit"><CrossIcon size={42} /></ToolButton>
      </Toolbar>

      <Radar>
        <AirportMap />

        <ListWindow $top={2} $left={13} $width={279}>
          <Bar letters={["A*", "D*", "O*", "T*"]} title="Planes" />
          <MonoBlock>
            <MonoLine $color="#d8d8d8">CXA833   A CYYC 0:18</MonoLine>
            <MonoLine $color="#868686">BFL0420  A CYFS 124</MonoLine>
            <MonoLine $color="#868686">WJA443   A CYEG 137</MonoLine>
          </MonoBlock>
        </ListWindow>

        <ListWindow $top={196} $left={0} $width={1534}>
          <Bar letters={["6", "F", "S"]} title="Sector Inbound List" closed />
        </ListWindow>
        <ListWindow $top={382} $left={0} $width={1627}>
          <Bar letters={["6", "F", "S"]} title="Sector Exit List" closed />
        </ListWindow>
        <ListWindow $top={544} $left={0} $width={1336}>
          <Bar letters={["6", "F", "S"]} title="Departure List" />
          <Headings columns={departureColumns} />
        </ListWindow>

        <ListWindow $top={2} $right={330} $width={140}>
          <Bar letters={["F*", "A*"]} title="Vo" />
        </ListWindow>
        <ListWindow $top={2} $right={3} $width={299}>
          <Bar letters={["F*", "C*", "A*", "T*", "G*", "S*", "O*", "U*"]} title="" />
          <MonoBlock $indent={23}>
            <MonoLine $color="#e8e800">»QF CZEG_CTR</MonoLine>
            <MonoLine $color="#e8e800"> 10 CYYC_ATIS</MonoLine>
          </MonoBlock>
        </ListWindow>
        <ListWindow $top={158} $right={31} $width={240}>
          <Bar letters={["6", "F", "S"]} title="Arrival List" />
          <Headings columns={arrivalColumns} />
        </ListWindow>
        <ListWindow $top={522} $right={3} $width={428}>
          <Bar letters={["6", "F", "S", "I*", "V*", "C", "U*", "O*", "N"]} title="FP List" />
          <Headings columns={fpColumns} />
        </ListWindow>
        <ListWindow $top={904} $right={3} $width={583}>
          <Bar letters={["6", "F", "S"]} title="CARD List" />
          <Headings columns={cardColumns} />
        </ListWindow>

        <Channels>
          <MonoLine $height={33} $color="#e8e8e8">ATC</MonoLine>
          <MonoLine $height={33} $color="#00e0e0">CZEG_CTR</MonoLine>
          <MonoLine $height={33} $color="#e8e8e8"><Selected>118.400</Selected></MonoLine>
          <MonoLine $height={33} $color="#00e0e0">server</MonoLine>
          <MonoLine $height={33} $color="#00e0e0">Message</MonoLine>
        </Channels>

        <VoiceDialog />
      </Radar>

      <Messages aria-label="Messages" />
      <CommandLine>
        <label htmlFor="command">WT21 on 118.400</label>
        <input id="command" />
      </CommandLine>
    </Screen>
  );
};

export default App;
